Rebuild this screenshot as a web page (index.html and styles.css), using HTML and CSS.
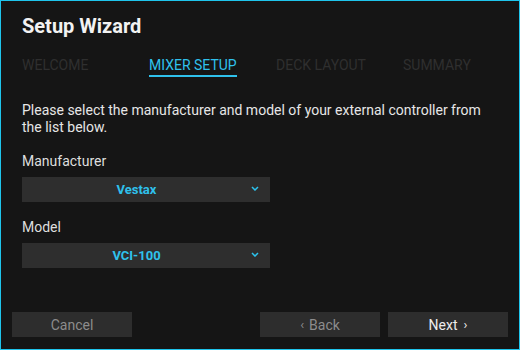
FILE: index.html
```html
<!DOCTYPE html>
<html>
<head>
<meta charset="utf-8">
<link rel="stylesheet" href="styles.css">
</head>
<body>
<div class="window">
  <h1 class="title">Setup Wizard</h1>
  <div class="tabs">
    <div class="tab"><span>WELCOME</span></div>
    <div class="tab active"><span>MIXER SETUP</span></div>
    <div class="tab"><span>DECK LAYOUT</span></div>
    <div class="tab"><span>SUMMARY</span></div>
  </div>
  <div class="content">
    <p class="intro">Please select the manufacturer and model of your external controller from the list below.</p>
    <div class="field">
      <div class="label">Manufacturer</div>
      <div class="select">
        <span class="value">Vestax</span>
        <svg class="chev" width="8" height="5" viewBox="0 0 8 5"><path d="M1 1 L4 4 L7 1" fill="none" stroke="#2bc3ee" stroke-width="1.5"/></svg>
      </div>
    </div>
    <div class="field">
      <div class="label">Model</div>
      <div class="select">
        <span class="value">VCI-100</span>
        <svg class="chev" width="8" height="5" viewBox="0 0 8 5"><path d="M1 1 L4 4 L7 1" fill="none" stroke="#2bc3ee" stroke-width="1.5"/></svg>
      </div>
    </div>
  </div>
  <div class="footer">
    <button class="btn dim">Cancel</button>
    <div class="spacer"></div>
    <button class="btn dim"><span class="arr left">‹</span>Back</button>
    <button class="btn bright">Next<span class="arr right">›</span></button>
  </div>
</div>
</body>
</html>
```
FILE: styles.css
```css
html, body {
  margin: 0;
  padding: 0;
  background: #151515;
}
.window {
  width: 520px;
  height: 350px;
  box-sizing: border-box;
  border: 1px solid #1fc4ec;
  background: #151515;
  display: flex;
  flex-direction: column;
  font-family: Roboto, "Liberation Sans", sans-serif;
  color: #e4e4e4;
}
.title {
  margin: 13px 0 0 21px;
  font-size: 20px;
  line-height: 24px;
  font-weight: 700;
  color: #f2f2f2;
}
.tabs {
  display: grid;
  grid-template-columns: repeat(4, 127px);
  margin: 17px 0 0 21px;
}
.tab span {
  display: inline-block;
  font-size: 14px;
  line-height: 16px;
  color: #2f2f2f;
  padding-bottom: 2px;
  border-bottom: 2px solid transparent;
}
.tab.active span {
  color: #2fc1ec;
  border-bottom-color: #2fc1ec;
}
.content {
  flex: 1;
  padding: 0 16px 0 21px;
}
.intro {
  margin: 25px 0 0 0;
  font-size: 14px;
  line-height: 17px;
  color: #e6e6e6;
}
.field {
  margin-top: 17px;
}
.label {
  font-size: 14px;
  line-height: 17px;
  color: #dedede;
}
.select {
  margin-top: 7px;
  width: 248px;
  height: 25px;
  background: #2e2e2e;
  display: flex;
  align-items: center;
  box-sizing: border-box;
  padding-right: 11px;
}
.select .value {
  flex: 1;
  text-align: center;
  font-size: 13px;
  font-weight: 700;
  color: #2fc1ec;
}
.chev {
  display: block;
  margin-top: -2px;
}
.footer {
  display: flex;
  gap: 8px;
  padding: 0 11px 12px 11px;
}
.spacer {
  flex: 1;
}
.btn {
  width: 120px;
  height: 25px;
  border: none;
  background: #2d2d2d;
  font-family: Roboto, "Liberation Sans", sans-serif;
  font-size: 14px;
  padding: 0;
  display: flex;
  align-items: center;
  justify-content: center;
}
.btn.dim {
  color: #8c8c8c;
}
.btn.bright {
  color: #ececec;
}
.arr {
  font-size: 13px;
}
.arr.left {
  margin-right: 5px;
}
.arr.right {
  margin-left: 6px;
}
```
